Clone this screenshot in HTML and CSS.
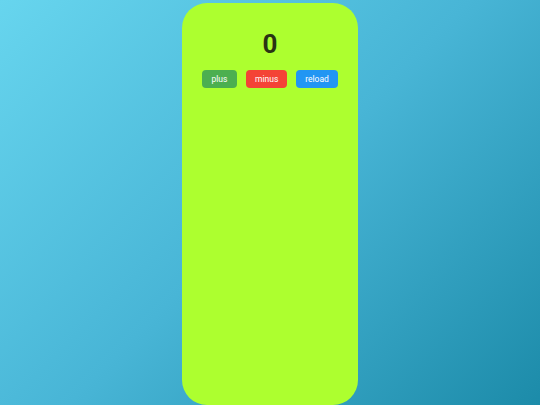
FILE: index.html
```html
<!DOCTYPE html>
<html>
<head>
<meta charset="utf-8">
<link rel="stylesheet" href="styles.css">
</head>
<body>
<div class="page">
  <div class="card">
    <div class="count">0</div>
    <div class="buttons">
      <button class="btn plus">plus</button>
      <button class="btn minus">minus</button>
      <button class="btn reload">reload</button>
    </div>
  </div>
</div>
</body>
</html>
```
FILE: styles.css
```css
html, body {
  margin: 0;
  padding: 0;
}
body {
  width: 540px;
  height: 405px;
  overflow: hidden;
  background: linear-gradient(135deg, #67d5ee 0%, #48b5d6 50%, #1c8ba9 100%);
  font-family: Roboto, "Liberation Sans", sans-serif;
}
.page {
  display: flex;
  justify-content: center;
  padding-top: 3px;
}
.card {
  width: 176px;
  height: 402px;
  background: #adff2f;
  border-radius: 25px;
  display: flex;
  flex-direction: column;
  align-items: center;
  padding-top: 26px;
  box-sizing: border-box;
}
.count {
  font-size: 26px;
  font-weight: bold;
  line-height: 30px;
  color: #2a3314;
}
.buttons {
  display: flex;
  gap: 9px;
  margin-top: 11px;
}
.btn {
  height: 18px;
  padding: 0 9px;
  border: none;
  border-radius: 4px;
  color: #fff;
  font-family: Roboto, "Liberation Sans", sans-serif;
  font-size: 8.5px;
  line-height: 18px;
}
.plus { background: #4caf50; width: 35px; }
.minus { background: #f44336; width: 41px; }
.reload { background: #2196f3; width: 42px; }
```
